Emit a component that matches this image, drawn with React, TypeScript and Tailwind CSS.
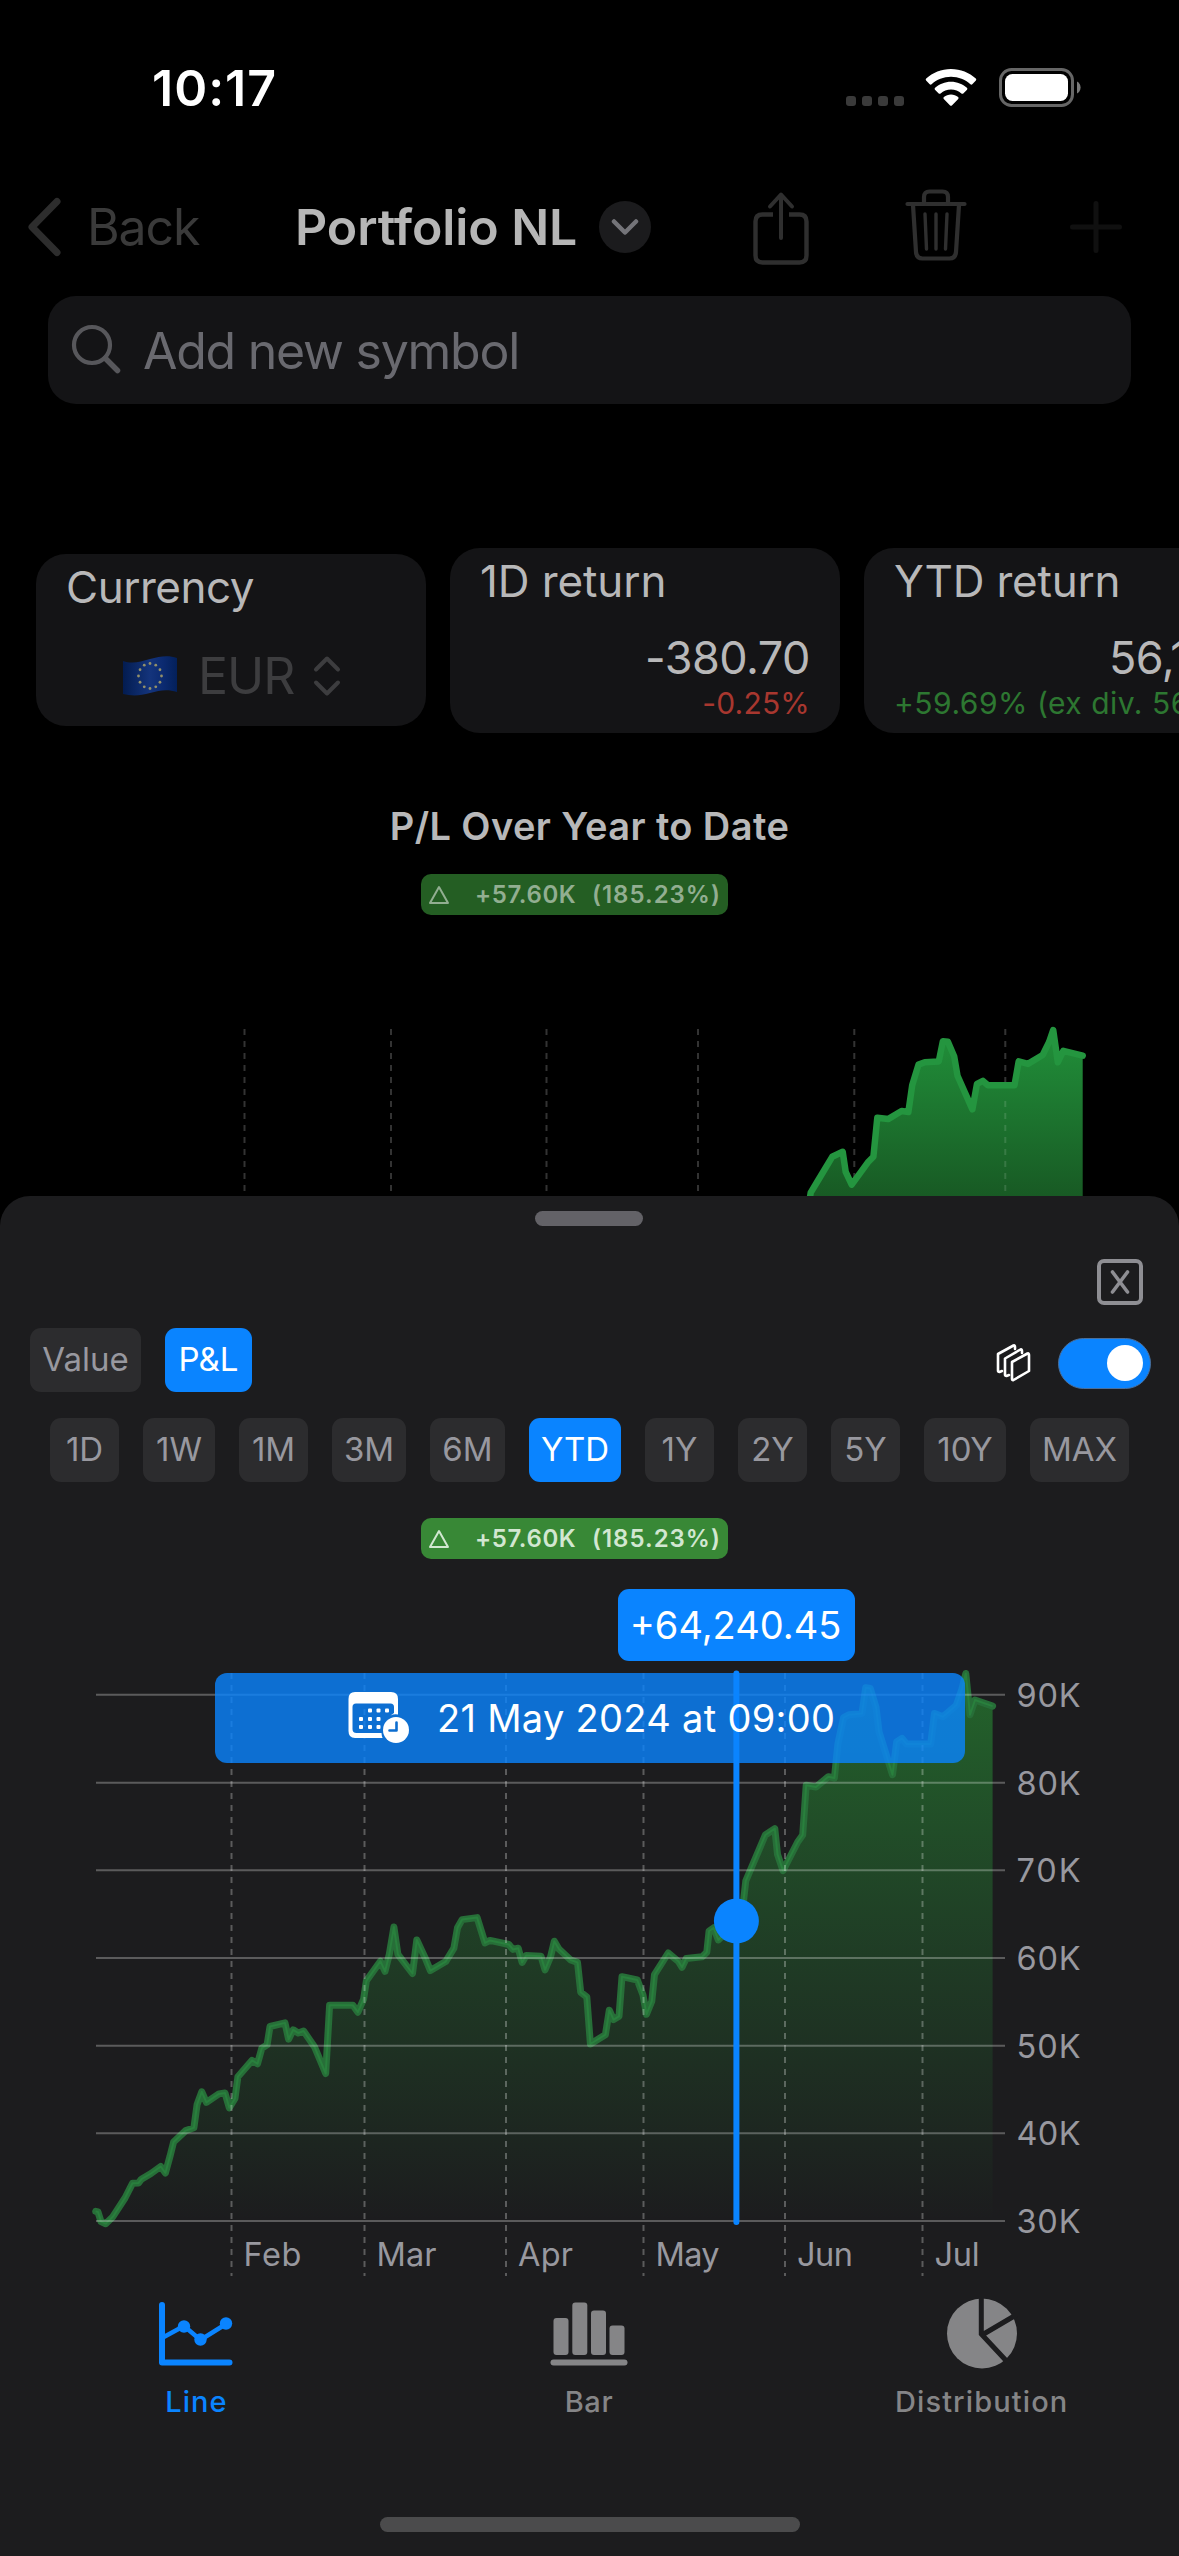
import { useState } from "react";
import type { ReactNode } from "react";

const RANGES = [
  { label: "1D", width: "w-[69px]" },
  { label: "1W", width: "w-[72px]" },
  { label: "1M", width: "w-[69px]" },
  { label: "3M", width: "w-[74px]" },
  { label: "6M", width: "w-[75px]" },
  { label: "YTD", width: "w-[92px]" },
  { label: "1Y", width: "w-[69px]" },
  { label: "2Y", width: "w-[69px]" },
  { label: "5Y", width: "w-[69px]" },
  { label: "10Y", width: "w-[82px]" },
  { label: "MAX", width: "w-[99px]" },
];

const MONTHS = [
  { label: "Feb", x: 231.5, width: 58 },
  { label: "Mar", x: 364.5, width: 60 },
  { label: "Apr", x: 506, width: 55 },
  { label: "May", x: 643.5, width: 64 },
  { label: "Jun", x: 785, width: 56 },
  { label: "Jul", x: 922.5, width: 45 },
];

const LEVELS = [
  { label: "90K", y: 54.7 },
  { label: "80K", y: 142.7 },
  { label: "70K", y: 230.3 },
  { label: "60K", y: 318 },
  { label: "50K", y: 405.7 },
  { label: "40K", y: 493.3 },
  { label: "30K", y: 581 },
];

const SERIES: [number, number][] = [
  [95.7, 571.4], [98, 572], [101, 581.6], [105.7, 583.7], [112.9, 576.7], [125, 558], [132.5, 543.3],
  [138.6, 542.9], [141.4, 539.2], [151, 533.5], [160.7, 526.5], [165.4, 533], [170, 516.3],
  [173.6, 502], [185.7, 490.6], [193.9, 487.8], [197.1, 464.5], [201.8, 451.8], [206.4, 462.4],
  [218.9, 453.9], [225, 453], [229.3, 467.8], [235, 458.4], [237.9, 436.7], [252.1, 420.4],
  [257.5, 423.7], [261.8, 408.2], [267.1, 404.9], [270, 386.5], [285, 382.9], [288.6, 399.2],
  [293.2, 389.8], [298.2, 393], [303.6, 391], [314.6, 407], [325.7, 433.5], [329.6, 365.3],
  [352.9, 365.3], [357.9, 372.2], [363.6, 359.2], [366.4, 340.8], [380.4, 321.2], [385, 331.4],
  [389.3, 314.3], [393.9, 287], [397.9, 314.3], [412.5, 333.5], [416.8, 300], [425.4, 318.4],
  [430.4, 330.6], [445.7, 321.6], [453.9, 308.2], [457.5, 287.8], [462.1, 279.6], [477.1, 277.6],
  [485, 302.9], [490, 300.4], [508.9, 304.5], [512.9, 309.4], [518.2, 308.2], [522.1, 322.4],
  [526.1, 315.5], [541, 316.3], [545, 329.8], [550.7, 316.3], [554.3, 301.2], [558.9, 309],
  [570.7, 320], [577.5, 322.4], [580.7, 352.2], [586.8, 357.1], [590.4, 404], [605.4, 394.7],
  [609.3, 370.2], [613.6, 379.6], [619, 376.3], [622, 336.7], [637.3, 340], [643, 355.1],
  [646.5, 374.3], [651.8, 361.2], [654.5, 334.7], [668.2, 313], [678.6, 321.6], [682, 327.3],
  [686.2, 318.4], [702.2, 316.7], [706.8, 312.2], [709.1, 291], [713.7, 287.8], [718.3, 300],
  [727, 291.8], [736.2, 280.8], [743.5, 261.2], [745.8, 240.8], [751.9, 226.5], [765.3, 195],
  [774.8, 188.6], [777.5, 214.3], [783, 230.6], [797.7, 202], [802.7, 195], [806.2, 145.3],
  [816, 147], [828.3, 136.7], [834.4, 138], [837.9, 104], [843.6, 77.6], [849.3, 74.7],
  [862, 73.5], [865.7, 47.8], [870.3, 48.5], [876, 67.3], [879, 91.8], [892.5, 134.7],
  [896.7, 102], [902, 98.4], [906.6, 104], [930.7, 104], [934.5, 73.5], [943, 76.7],
  [956.3, 65.3], [962, 49], [965.8, 33.5], [970, 74.7], [975, 60], [992.6, 66.1],
];

function toPath(points: [number, number][]) {
  return points.map(([x, y], i) => `${i ? "L" : "M"}${x.toFixed(1)} ${y.toFixed(1)}`).join("");
}

const LINE = toPath(SERIES);
const AREA = `${LINE}L992.6 581L95.7 581Z`;

// The page behind the sheet shows the same series on a wider, flatter plot
const BACK_SERIES = SERIES.map(([x, y]): [number, number] => [
  1082.7 - (992.6 - x) * 1.102,
  10 + (y - 33.5) * 0.785,
]);
const BACK_LINE = toPath(BACK_SERIES);
const BACK_AREA = `${BACK_LINE}L1082.7 434L94 434Z`;

function StatusBar() {
  return (
    <div className="flex h-[177px] items-start pt-[63px] pl-[152px] text-white">
      <span className="w-[126px] text-[50px] leading-[50px] font-semibold tracking-[1px]">10:17</span>
      <div className="ml-[568px] flex pt-[33px] gap-[6px]">
        {[0, 1, 2, 3].map((i) => (
          <span key={i} className="size-[10px] rounded-[3px] bg-[#3a3a3a]" />
        ))}
      </div>
      <svg className="ml-[20px] mt-[5px]" width="54" height="40" viewBox="0 0 54 40">
        <path
          fill="#fff"
          d="M27 1C17.400 1 8.700 4.600 2.200 10.600C1.600 11.200 1.600 12 2.100 12.500L5.700 16.300C6.200 16.800 7 16.800 7.600 16.300C12.700 11.600 19.500 8.800 27 8.800S41.300 11.600 46.400 16.300C47 16.800 47.800 16.800 48.300 16.300L51.900 12.500C52.400 12 52.400 11.200 51.800 10.600C45.300 4.600 36.600 1 27 1ZM27 13.700C20.900 13.700 15.300 16 11.100 19.800C10.500 20.300 10.500 21.200 11 21.700L14.700 25.400C15.200 25.900 16 25.900 16.600 25.400C19.400 23 23 21.500 27 21.500S34.600 23 37.400 25.400C38 25.900 38.800 25.900 39.300 25.400L43 21.700C43.500 21.200 43.500 20.300 42.900 19.800C38.700 16 33.100 13.700 27 13.700ZM27 26.600C24.300 26.600 21.900 27.500 19.900 29.100C19.300 29.600 19.300 30.400 19.800 30.900L26.100 37.400C26.600 37.900 27.400 37.900 27.900 37.400L34.200 30.900C34.700 30.400 34.700 29.600 34.100 29.100C32.100 27.500 29.700 26.600 27 26.600Z"
        />
      </svg>
      <svg className="ml-[21px] mt-[5px]" width="84" height="40" viewBox="0 0 84 40">
        <rect x="1.500" y="1.500" width="72" height="36" rx="11" fill="none" stroke="#666" strokeWidth="3" />
        <rect x="6" y="6" width="63" height="27" rx="7.500" fill="#fff" />
        <path d="M78 13.500C80.300 14.500 81.600 17 81.600 19.500S80.300 24.500 78 25.500Z" fill="#7a7a7a" />
      </svg>
    </div>
  );
}

function NavBar() {
  return (
    <div className="flex h-[100px] items-center pl-[26px]">
      <svg width="38" height="62" viewBox="0 0 38 62" fill="none" stroke="#2d2d2d" strokeWidth="7" strokeLinecap="round" strokeLinejoin="round">
        <path d="M31 5.500L6 31L31 56.500" />
      </svg>
      <span className="ml-[23px] w-[208px] text-[50px] leading-[50px] tracking-[-1.100px] text-[#3a3a3a]">Back</span>
      <span className="w-[285px] whitespace-nowrap text-[50px] leading-[50px] font-semibold tracking-[-0.100px] text-[#b6b6b6]">
        Portfolio NL
      </span>
      <span className="ml-[19px] flex size-[52px] items-center justify-center rounded-full bg-[#1b1b1d]">
        <svg width="28" height="18" viewBox="0 0 28 18" fill="none" stroke="#747479" strokeWidth="4.500" strokeLinecap="round" strokeLinejoin="round">
          <path d="M3 3.500L14 14.500L25 3.500" />
        </svg>
      </span>
      <svg className="mt-[2px] ml-[101px]" width="58" height="76" viewBox="0 0 58 76" fill="none" stroke="#2f2f2f" strokeWidth="4.400" strokeLinecap="round" strokeLinejoin="round">
        <path strokeLinecap="butt" d="M21 24.500H10.500Q3.500 24.500 3.500 31.500V65.500Q3.500 72.500 10.500 72.500H47.500Q54.500 72.500 54.500 65.500V31.500Q54.500 24.500 47.500 24.500H37" />
        <path strokeWidth="4" d="M29 48V5M18 16.500L29 4.500L40 16.500" />
      </svg>
      <svg className="ml-[95px] -mt-[5px]" width="62" height="74" viewBox="0 0 62 74" fill="none" stroke="#2f2f2f" strokeWidth="4.200" strokeLinecap="round" strokeLinejoin="round">
        <path d="M2.500 16H59.500" />
        <path d="M19 16V9Q19 3.500 24.500 3.500H37.500Q43 3.500 43 9V16" />
        <path d="M8 17L11 64Q11.400 70.500 17.500 70.500H44.500Q50.600 70.500 51 64L54 17" />
        <path strokeWidth="3.400" d="M20 26L21.500 61M31 26V61M42 26L40.500 61" />
      </svg>
      <svg className="ml-[102px]" width="54" height="54" viewBox="0 0 54 54" stroke="#101010" strokeWidth="5" strokeLinecap="round">
        <path d="M27 3.500V50.500M3.500 27H50.500" />
      </svg>
    </div>
  );
}

function SearchField() {
  return (
    <div className="mx-[48px] mt-[19px] flex h-[108px] items-center rounded-[28px] bg-[#141416] pl-[23px]">
      <svg width="52" height="52" viewBox="0 0 52 52" fill="none" stroke="#57575b" strokeLinecap="round">
        <circle cx="21" cy="21" r="18" strokeWidth="4.200" />
        <path d="M34.500 34.500L46.500 46.500" strokeWidth="5.500" />
      </svg>
      <span className="mt-[2px] ml-[20px] text-[50px] leading-[50px] tracking-[-1.250px] text-[#69696f]">Add new symbol</span>
    </div>
  );
}

function EuFlag() {
  const stars = Array.from({ length: 12 }, (_, i) => (i * Math.PI) / 6);
  return (
    <svg width="56" height="42" viewBox="0 0 56 42">
      <defs>
        <linearGradient id="flag" x1="0" x2="1">
          <stop offset="0" stopColor="#031c50" />
          <stop offset="0.500" stopColor="#14347c" />
          <stop offset="0.750" stopColor="#0b2a70" />
          <stop offset="1" stopColor="#03205a" />
        </linearGradient>
      </defs>
      <path d="M1 6C10 9 18 7 28 4C38 1 47 0 55 3V37C46 34 38 35 28 38C18 41 9 41 1 39Z" fill="url(#flag)" />
      {stars.map((a) => (
        <circle key={a} cx={28 + Math.sin(a) * 11.5} cy={21 - Math.cos(a) * 12.5} r="1.400" fill="#93906a" />
      ))}
    </svg>
  );
}

function Cards() {
  return (
    <div className="mt-[144px] flex h-[185px] gap-[24px] pl-[36px]">
      <div className="mt-[6px] h-[172px] w-[390px] shrink-0 rounded-[30px] bg-[#141416] px-[30px] pt-[11px]">
        <div className="text-[44px] leading-[44px] tracking-[-0.500px] text-[#b8b8b9]">Currency</div>
        <div className="mt-[42px] flex items-center pl-[56px]">
          <EuFlag />
          <span className="ml-[20px] w-[98px] text-[50px] leading-[50px] tracking-[-1px] text-[#3d3d3f]">EUR</span>
          <svg className="ml-[17px]" width="28" height="44" viewBox="0 0 28 44" fill="none" stroke="#3d3d3f" strokeWidth="4" strokeLinecap="round" strokeLinejoin="round">
            <path d="M3 15.500L14 4.500L25 15.500M3 28.500L14 39.500L25 28.500" />
          </svg>
        </div>
      </div>
      <div className="w-[390px] shrink-0 rounded-[30px] bg-[#141416] px-[30px] pt-[11px]">
        <div className="text-[44px] leading-[44px] tracking-[-0.100px] text-[#b8b8b9]">1D return</div>
        <div className="mt-[33px] text-right text-[45px] leading-[44px] tracking-[-0.500px] text-[#b8b8b9]">-380.70</div>
        <div className="mt-[8px] text-right text-[30px] leading-[30px] tracking-[0.200px] text-[#a8372f]">-0.25%</div>
      </div>
      <div className="w-[460px] shrink-0 rounded-[30px] bg-[#141416] px-[30px] pt-[11px]">
        <div className="text-[44px] leading-[44px] tracking-[-0.200px] text-[#b8b8b9]">YTD return</div>
        <div className="mt-[33px] pl-[215px] text-[45px] leading-[44px] tracking-[-0.500px] text-[#b8b8b9]">56,1</div>
        <div className="mt-[8px] whitespace-nowrap text-[30px] leading-[30px] tracking-[0.500px] text-[#2d7731]">
          +59.69% (ex div. 56
        </div>
      </div>
    </div>
  );
}

function ChangeBadge({ dimmed = false }: { dimmed?: boolean }) {
  return (
    <div
      className={`ml-[421px] flex h-[41px] w-[307px] items-center rounded-[10px] pl-[7px] text-[24px] leading-[24px] font-semibold whitespace-nowrap ${
        dimmed ? "bg-[#245e23] text-[#92ae91]" : "bg-[#388836] text-[#d2e7d1]"
      }`}
    >
      <svg width="22" height="20" viewBox="0 0 22 20" fill="none" stroke="currentColor" strokeWidth="2" strokeLinejoin="round">
        <path d="M11 2L20 18H2Z" />
      </svg>
      <span className="ml-[25px] w-[117px] tracking-[0.600px]">+57.60K</span>
      <span className="tracking-[1px]">(185.23%)</span>
    </div>
  );
}

function BackChart() {
  return (
    <svg className="mt-[105px]" width="1179" height="176" viewBox="0 0 1179 176">
      <defs>
        <linearGradient id="backFill" gradientUnits="userSpaceOnUse" x1="0" y1="10" x2="0" y2="176">
          <stop offset="0" stopColor="#21903a" />
          <stop offset="1" stopColor="#185a24" />
        </linearGradient>
      </defs>
      {[244.5, 391, 546.5, 698, 854.3, 1005.3].map((x) => (
        <path key={x} d={`M${x} 9V176`} stroke="#333" strokeWidth="2" strokeDasharray="6 6" />
      ))}
      <path d={BACK_AREA} fill="url(#backFill)" />
      <path d="M1005.300 81V176" stroke="#fff" strokeOpacity="0.130" strokeWidth="2" strokeDasharray="6 6" />
      <path d={BACK_LINE} fill="none" stroke="#24953f" strokeWidth="6.500" strokeLinecap="round" strokeLinejoin="round" />
    </svg>
  );
}

function CloseButton() {
  return (
    <svg width="46" height="46" viewBox="0 0 46 46" fill="none" stroke="#8e8e93" strokeWidth="4" strokeLinecap="round">
      <rect x="2" y="2" width="42" height="42" rx="5" />
      <path strokeWidth="3.600" d="M15.500 13L30.500 33M30.500 13L15.500 33" />
    </svg>
  );
}

function Pill({ active, width, onClick, children }: { active: boolean; width: string; onClick: () => void; children: ReactNode }) {
  return (
    <button
      onClick={onClick}
      className={`flex h-[64px] items-center justify-center rounded-[11px] pb-[2px] text-[33px] leading-[33px] ${width} ${
        active ? "bg-[#0a84ff] text-white" : "bg-[#2c2c2e] text-[#98989f]"
      }`}
    >
      {children}
    </button>
  );
}

function CalendarIcon() {
  return (
    <svg width="62" height="54" viewBox="0 0 62 54">
      <path
        fill="#fff"
        fillRule="evenodd"
        d="M7 1H43Q50 1 50 8V23.500Q46 22.800 42.500 24.500L46 22V16Q46 12.500 42.500 12.500H8Q4.500 12.500 4.500 16V38Q4.500 42 8.500 42H33.500Q33.600 44.500 34.600 47H7Q0.500 47 0.500 40V8Q0.500 1 7 1Z"
      />
      {[20, 28.5, 37].map((x) => (
        <rect key={x} x={x} y="17.500" width="4" height="4" rx="1" fill="#fff" />
      ))}
      {[11, 20, 28.5].map((x) => (
        <g key={x} fill="#fff">
          <rect x={x} y="26" width="4" height="4" rx="1" />
          <rect x={x} y="34" width="4" height="4" rx="1" />
        </g>
      ))}
      <circle cx="48" cy="39" r="13" fill="#fff" />
      <path d="M48.500 31.500V39.500H41.500" fill="none" stroke="#0d6dcf" strokeWidth="2.600" strokeLinecap="round" strokeLinejoin="round" />
    </svg>
  );
}

function SheetChart() {
  return (
    <div className="relative h-[640px]">
      <svg width="1179" height="640" viewBox="0 0 1179 640" className="block">
        <defs>
          <linearGradient id="fill" gradientUnits="userSpaceOnUse" x1="0" y1="33" x2="0" y2="581">
            <stop offset="0" stopColor="#2bb33a" stopOpacity="0.480" />
            <stop offset="0.500" stopColor="#2aa53c" stopOpacity="0.240" />
            <stop offset="1" stopColor="#2aa53c" stopOpacity="0" />
          </linearGradient>
        </defs>
        <path d={AREA} fill="url(#fill)" />
        <path d={LINE} fill="none" stroke="#276e38" strokeWidth="7" strokeLinecap="round" strokeLinejoin="round" />
        <path d={LINE} fill="none" stroke="#29803d" strokeWidth="2" strokeLinejoin="round" />
        {LEVELS.map((level) => (
          <path key={level.label} d={`M96 ${level.y}H1005`} stroke="#fff" strokeOpacity="0.280" strokeWidth="2" />
        ))}
        {MONTHS.map((month) => (
          <path key={month.label} d={`M${month.x} 33V636`} stroke="#fff" strokeOpacity="0.280" strokeWidth="2" strokeDasharray="6 6" />
        ))}
        <g fill="#98989f" fontSize="32.500">
          {LEVELS.map((level) => (
            <text key={level.label} x="1016.500" y={level.y + 12} textLength="64">
              {level.label}
            </text>
          ))}
          {MONTHS.map((month) => (
            <text key={month.label} x={month.x + 12} y="626" textLength={month.width}>
              {month.label}
            </text>
          ))}
        </g>
      </svg>
      <div className="absolute top-[33px] left-[215px] h-[90px] w-[750px] rounded-[12px] bg-[#0a84ff]/80" />
      <svg width="1179" height="640" viewBox="0 0 1179 640" className="absolute inset-0">
        <path d="M736.400 33.500V582" stroke="#0a84ff" strokeWidth="6" strokeLinecap="round" />
        <circle cx="736.400" cy="281" r="22.500" fill="#0a84ff" />
      </svg>
      <div className="absolute top-[33px] left-[215px] flex h-[90px] w-[750px] items-center pl-[133px] text-white">
        <CalendarIcon />
        <span className="ml-[27px] whitespace-nowrap text-[38px] leading-[38px] tracking-[0.300px]">21 May 2024 at 09:00</span>
      </div>
      <div className="absolute -top-[51px] left-[618px] flex h-[72px] w-[237px] items-center justify-center rounded-[11px] bg-[#0a84ff] pr-[2px] text-[38px] leading-[38px] text-white">
        +64,240.45
      </div>
    </div>
  );
}

function TabBar() {
  return (
    <div className="grid grid-cols-3 pr-[1px] text-[29px] leading-[29px] font-medium text-[#858587]">
      <div className="flex flex-col items-center text-[#0a84ff]">
        <svg width="80" height="72" viewBox="0 0 80 72" fill="none" stroke="currentColor">
          <path d="M6 8V65.500H73.500" strokeWidth="6" strokeLinecap="round" strokeLinejoin="round" />
          <path d="M6 41L28 29L44.500 43L70 27" strokeWidth="4.500" />
          <g fill="currentColor" stroke="none">
            <circle cx="28" cy="29.500" r="6.200" />
            <circle cx="44.500" cy="42.500" r="6.200" />
            <circle cx="70" cy="26.500" r="6.200" />
          </g>
        </svg>
        <span className="mt-[18px] tracking-[1px]">Line</span>
      </div>
      <div className="flex flex-col items-center">
        <svg width="78" height="72" viewBox="0 0 78 72" fill="currentColor">
          <rect x="3.500" y="21" width="15" height="37" rx="3" />
          <rect x="22.300" y="5.500" width="15" height="52.500" rx="3" />
          <rect x="41" y="13.500" width="15" height="44.500" rx="3" />
          <rect x="59.500" y="28.500" width="15" height="29.500" rx="3" />
          <rect x="0.500" y="62.500" width="77" height="6" rx="3" />
        </svg>
        <span className="mt-[18px] tracking-[0.600px]">Bar</span>
      </div>
      <div className="flex flex-col items-center">
        <svg width="72" height="72" viewBox="0 0 72 72">
          <circle cx="36" cy="36.500" r="35" fill="currentColor" />
          <path d="M35.300 0V37L60 63.500M36 38L70 18" fill="none" stroke="#1c1c1e" strokeWidth="5" />
        </svg>
        <span className="mt-[18px] tracking-[1.100px]">Distribution</span>
      </div>
    </div>
  );
}

function ChartSheet() {
  const [mode, setMode] = useState<"value" | "pl">("pl");
  const [range, setRange] = useState("YTD");
  const [stacked, setStacked] = useState(true);

  return (
    <div className="h-[1360px] rounded-t-[30px] bg-[#1c1c1e] pt-[15px]">
      <div className="ml-[535px] h-[15px] w-[108px] rounded-full bg-[#636267]" />
      <div className="mt-[33px] flex h-[46px] justify-end pr-[36px]">
        <CloseButton />
      </div>
      <div className="mt-[23px] flex h-[64px] items-center pr-[28px] pl-[30px]">
        <Pill active={mode === "value"} width="w-[111px]" onClick={() => setMode("value")}>
          Value
        </Pill>
        <span className="w-[24px]" />
        <Pill active={mode === "pl"} width="w-[87px]" onClick={() => setMode("pl")}>
          P&amp;L
        </Pill>
        <svg className="mt-[5px] ml-auto" width="36" height="40" viewBox="0 0 36 40" fill="none" stroke="#fff" strokeWidth="2.600" strokeLinejoin="round" strokeLinecap="round">
          <path d="M16 19L31.500 10.500Q33 10 33 12V28L17.500 37Q16 37.500 16 36Z" />
          <path d="M13 32L10.500 33Q9 33 9 31.500V15.500L24.500 6.500Q26 6 26 8V10" />
          <path d="M6 28L3.500 29Q2 29 2 27.500V11L17.500 2.500Q19 2 19 4V6" />
        </svg>
        <button
          onClick={() => setStacked(!stacked)}
          className={`mt-[6px] ml-[26px] flex h-[51px] w-[93px] items-center rounded-full border border-[#4a6f9b] px-[7px] ${
            stacked ? "justify-end bg-[#0a84ff]" : "justify-start bg-[#39393d]"
          }`}
        >
          <span className="size-[36px] rounded-full bg-white" />
        </button>
      </div>
      <div className="mt-[26px] flex gap-[24px] pl-[50px]">
        {RANGES.map((r) => (
          <Pill key={r.label} active={r.label === range} width={r.width} onClick={() => setRange(r.label)}>
            {r.label}
          </Pill>
        ))}
      </div>
      <div className="mt-[36px]">
        <ChangeBadge />
      </div>
      <div className="mt-[81px]">
        <SheetChart />
      </div>
      <div className="mt-[17px]">
        <TabBar />
      </div>
      <div className="mx-auto mt-[101px] h-[15px] w-[420px] rounded-full bg-[#4b4b4c]" />
    </div>
  );
}

export default function App() {
  return (
    <div className="h-[2556px] w-[1179px] overflow-hidden bg-black font-['Inter',sans-serif]">
      <div className="h-[1196px] overflow-hidden">
        <StatusBar />
        <NavBar />
        <SearchField />
        <Cards />
        <div className="mt-[74px] mb-[29px] text-center text-[38px] leading-[38px] font-semibold tracking-[0.400px] text-[#b8b8b9]">
          P/L Over Year to Date
        </div>
        <ChangeBadge dimmed />
        <BackChart />
      </div>
      <ChartSheet />
    </div>
  );
}
